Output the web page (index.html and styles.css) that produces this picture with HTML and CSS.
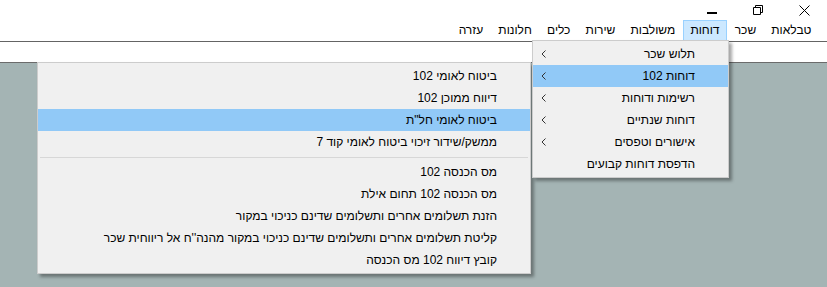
FILE: index.html
```html
<!DOCTYPE html>
<html lang="he">
<head>
<meta charset="utf-8">
<title>תפריט דוחות</title>
<link rel="stylesheet" href="styles.css">
</head>
<body>
<div class="app">
  <div class="titlebar">
    <span class="ctl ctl-min"><span class="min-glyph"></span></span>
    <span class="ctl"><svg width="10" height="10" viewBox="0 0 10 10"><path d="M2.5 2.5 V0.5 H9.5 V7.5 H7.5 M0.5 2.5 H7.5 V9.5 H0.5 Z" fill="none" stroke="#000" stroke-width="1"/></svg></span>
    <span class="ctl"><svg width="11" height="11" viewBox="0 0 11 11"><path d="M0.5 0.5 L10.5 10.5 M10.5 0.5 L0.5 10.5" stroke="#000" stroke-width="1"/></svg></span>
  </div>
  <nav class="menubar">
    <span class="mb-item">טבלאות</span>
    <span class="mb-item">שכר</span>
    <span class="mb-item mb-active">דוחות</span>
    <span class="mb-item">משולבות</span>
    <span class="mb-item">שירות</span>
    <span class="mb-item">כלים</span>
    <span class="mb-item">חלונות</span>
    <span class="mb-item">עזרה</span>
  </nav>
  <div class="toolbar"></div>
  <div class="workspace"></div>

  <ul class="menu menu-main">
    <li class="mi"><span class="lbl">תלוש שכר</span><svg class="chev" width="5" height="8" viewBox="0 0 5 8"><path d="M4.5 0.5 L1 4 L4.5 7.5" fill="none" stroke="#333" stroke-width="1"/></svg></li>
    <li class="mi mi-hl"><span class="lbl">דוחות 102</span><svg class="chev" width="5" height="8" viewBox="0 0 5 8"><path d="M4.5 0.5 L1 4 L4.5 7.5" fill="none" stroke="#333" stroke-width="1"/></svg></li>
    <li class="mi"><span class="lbl">רשימות ודוחות</span><svg class="chev" width="5" height="8" viewBox="0 0 5 8"><path d="M4.5 0.5 L1 4 L4.5 7.5" fill="none" stroke="#333" stroke-width="1"/></svg></li>
    <li class="mi"><span class="lbl">דוחות שנתיים</span><svg class="chev" width="5" height="8" viewBox="0 0 5 8"><path d="M4.5 0.5 L1 4 L4.5 7.5" fill="none" stroke="#333" stroke-width="1"/></svg></li>
    <li class="mi"><span class="lbl">אישורים וטפסים</span><svg class="chev" width="5" height="8" viewBox="0 0 5 8"><path d="M4.5 0.5 L1 4 L4.5 7.5" fill="none" stroke="#333" stroke-width="1"/></svg></li>
    <li class="mi"><span class="lbl">הדפסת דוחות קבועים</span></li>
  </ul>

  <ul class="menu menu-sub">
    <li class="mi"><span class="lbl">ביטוח לאומי 102</span></li>
    <li class="mi"><span class="lbl">דיווח ממוכן 102</span></li>
    <li class="mi mi-hl"><span class="lbl">ביטוח לאומי חל"ת</span></li>
    <li class="mi"><span class="lbl">ממשק/שידור זיכוי ביטוח לאומי קוד 7</span></li>
    <li class="sep"></li>
    <li class="mi"><span class="lbl">מס הכנסה 102</span></li>
    <li class="mi"><span class="lbl">מס הכנסה 102 תחום אילת</span></li>
    <li class="mi"><span class="lbl">הזנת תשלומים אחרים ותשלומים שדינם כניכוי במקור</span></li>
    <li class="mi"><span class="lbl">קליטת תשלומים אחרים ותשלומים שדינם כניכוי במקור מהנה''ח אל ריווחית שכר</span></li>
    <li class="mi"><span class="lbl">קובץ דיווח 102 מס הכנסה</span></li>
  </ul>
</div>
</body>
</html>
```

FILE: styles.css
```css
* { box-sizing: border-box; }
html, body { margin: 0; padding: 0; }
body {
  width: 827px;
  height: 287px;
  overflow: hidden;
  font-family: "Liberation Sans", "DejaVu Sans", sans-serif;
  font-size: 12px;
  color: #000;
  background: #fff;
}
.app {
  position: relative;
  width: 827px;
  height: 287px;
  display: flex;
  flex-direction: column;
}
.titlebar {
  height: 20px;
  flex: 0 0 20px;
  display: flex;
  justify-content: flex-end;
  align-items: stretch;
}
.ctl {
  width: 46px;
  flex: 0 0 46px;
  display: flex;
  align-items: center;
  justify-content: center;
}
.min-glyph {
  display: block;
  width: 10px;
  height: 2px;
  background: #000;
  margin-top: 5px;
}
.menubar {
  direction: rtl;
  display: flex;
  align-items: stretch;
  padding-right: 8px;
  border-bottom: 1px solid #646464;
  height: 22px;
  flex: 0 0 22px;
}
.mb-item {
  padding: 0 6.6px;
  line-height: 19px;
  border: 1px solid transparent;
}
.mb-active {
  background: #cce8ff;
  border-color: #99d1ff;
}
.toolbar {
  height: 21px;
  flex: 0 0 21px;
  background: #fff;
  border-bottom: 1px solid #6b6b6b;
}
.workspace {
  flex: 1;
  background: #a4b4b4;
}
.menu {
  list-style: none;
  margin: 0;
  position: absolute;
  direction: rtl;
  background: #f0f0f0;
  border: 1px solid #cccccc;
  padding: 2px 0 2px;
  box-shadow: 3px 3px 3px rgba(0,0,0,0.35);
}
.menu-main {
  left: 532px;
  top: 40px;
  width: 197px;
  z-index: 3;
}
.menu-sub {
  left: 37px;
  top: 62px;
  width: 494px;
  z-index: 2;
}
.mi {
  height: 22px;
  line-height: 22px;
  padding-right: 33px;
  display: flex;
  align-items: center;
  justify-content: space-between;
  white-space: nowrap;
}
.mi-hl { background: #91c9f7; }
.chev { margin-left: 8px; }
.sep {
  height: 8px;
  display: flex;
  align-items: center;
  padding: 0 2px;
}
.sep::after {
  content: "";
  flex: 1;
  border-top: 1px solid #d7d7d7;
}
```
